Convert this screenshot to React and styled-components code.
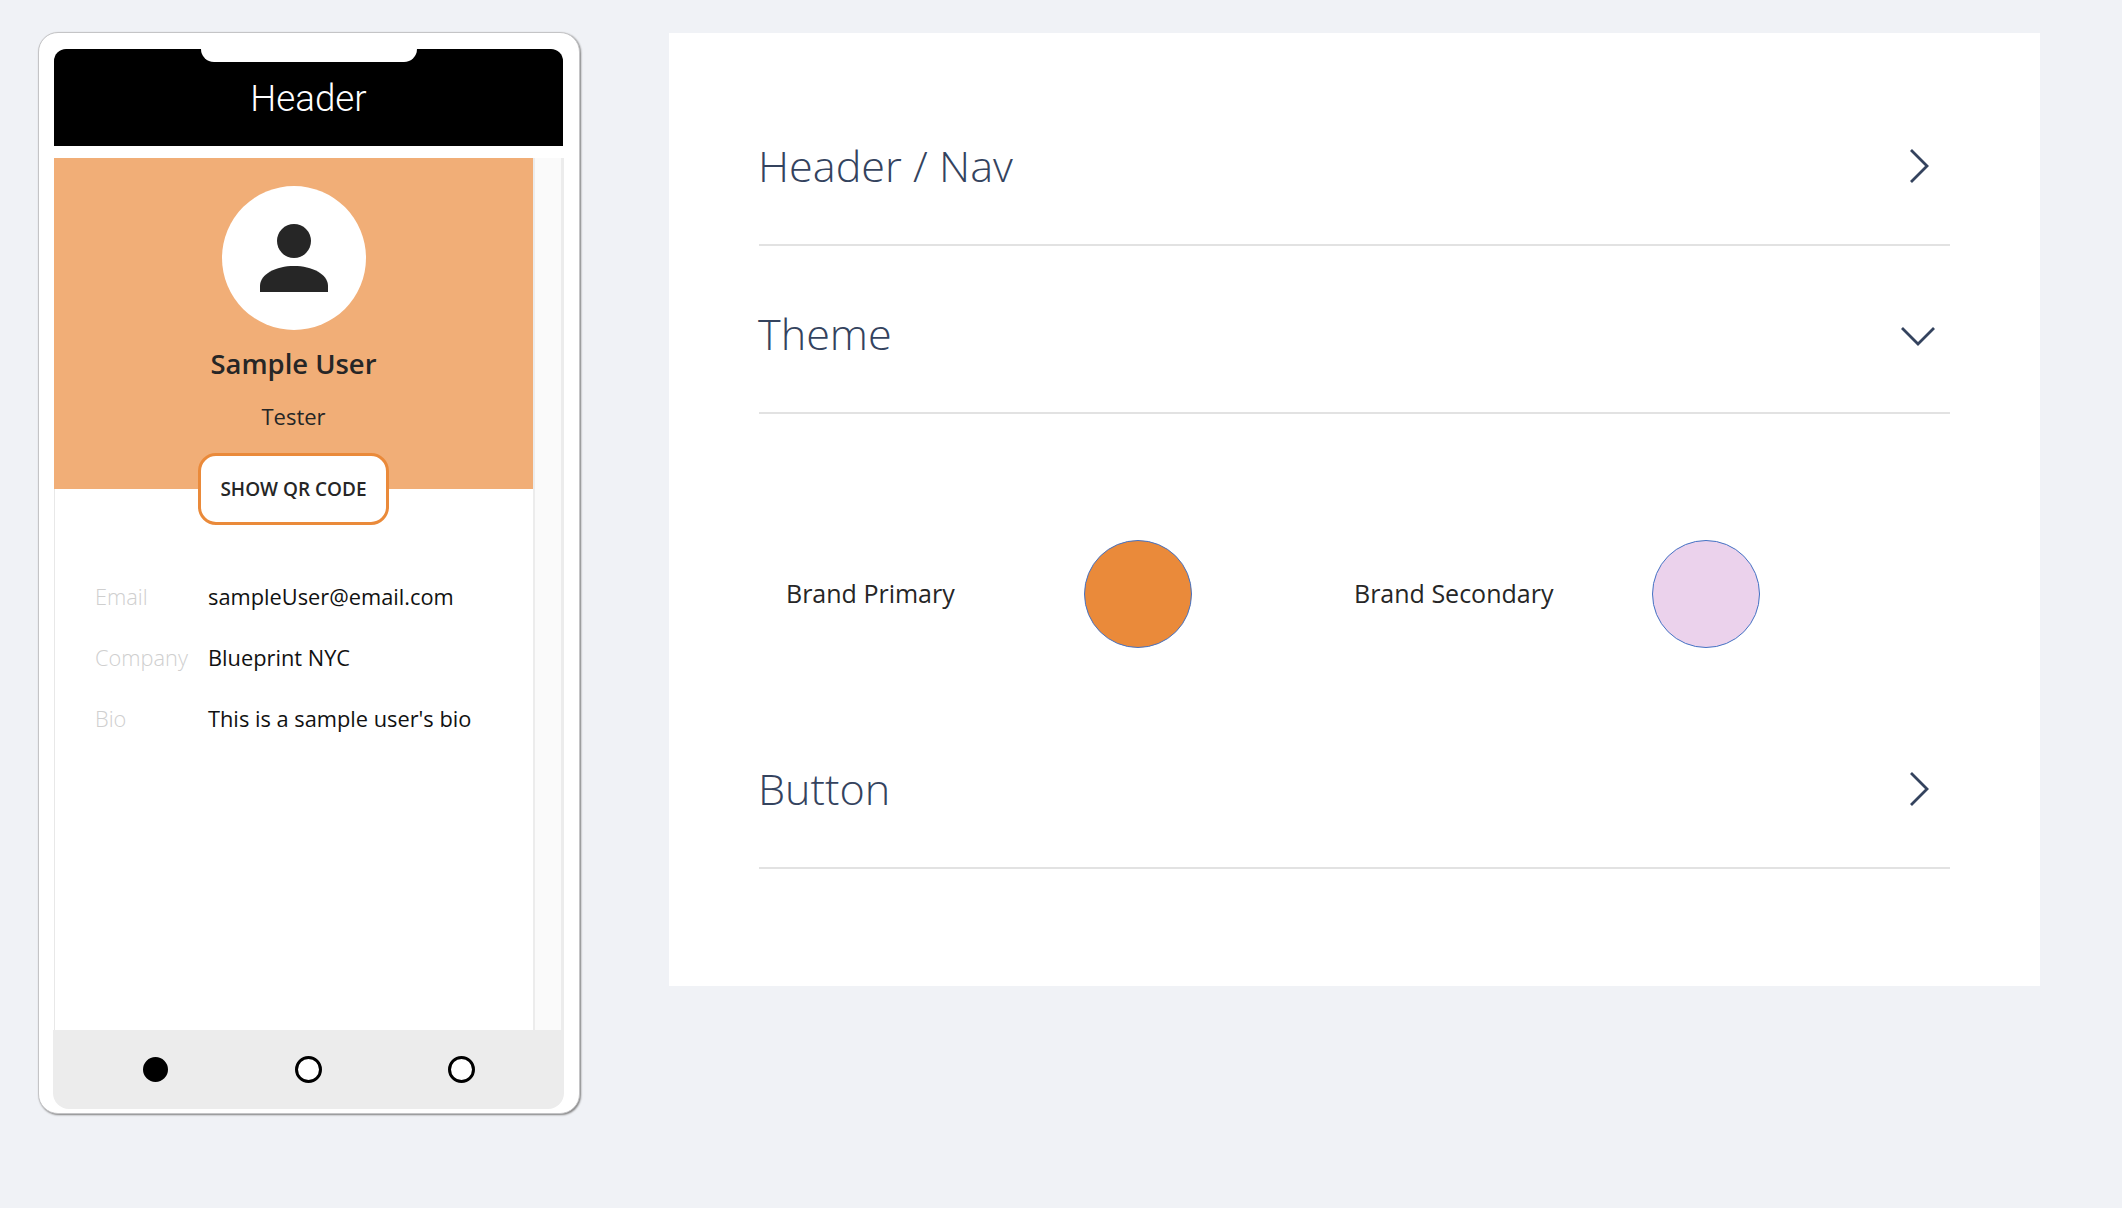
import React from 'react';
import styled, { createGlobalStyle } from 'styled-components';

const GlobalStyle = createGlobalStyle`
  * {
    box-sizing: border-box;
  }
  html, body {
    margin: 0;
    background-color: #f0f2f6;
    font-family: 'Open Sans', sans-serif;
  }
`;

const Page = styled.div`
  display: flex;
  align-items: flex-start;
  gap: 89px;
  height: 1208px;
  padding: 32px 0 0 38px;
  overflow: hidden;
`;

const Phone = styled.div`
  display: flex;
  flex-direction: column;
  flex: none;
  width: 542px;
  height: 1082px;
  padding: 16px 15px 4px;
  background-color: #fff;
  border: 1px solid #c4c4c6;
  border-radius: 20px;
  box-shadow: 1px 1px 2px #808080;
`;

const Header = styled.header`
  position: relative;
  flex: none;
  display: flex;
  align-items: center;
  justify-content: center;
  width: 509px;
  height: 97px;
  padding-top: 2px;
  background-color: #000;
  border-radius: 12px 12px 0 0;
  color: #fff;
  font-family: 'Roboto', sans-serif;
  font-size: 36.7px;
  font-weight: 300;
`;

const Notch = styled.div`
  position: absolute;
  top: 0;
  left: 147px;
  width: 216px;
  height: 13px;
  background-color: #fff;
  border-radius: 0 0 14px 14px;
`;

const Screen = styled.div`
  flex: 1;
  display: flex;
  min-height: 0;
  margin-top: 12px;
`;

const Content = styled.div`
  width: 481px;
  border-left: 1px solid #e8e8e8;
  border-right: 2px solid #ececec;
`;

const Scrollbar = styled.div`
  width: 29px;
  background-color: #fafafa;
  border-right: 3px solid #ececec;
`;

const Hero = styled.div`
  display: flex;
  flex-direction: column;
  align-items: center;
  height: 331px;
  margin-left: -1px;
  padding-top: 28px;
  background-color: #f1ae77;
  color: #262626;
`;

const Avatar = styled.div`
  display: flex;
  align-items: center;
  justify-content: center;
  flex: none;
  width: 144px;
  height: 144px;
  background-color: #fff;
  border-radius: 50%;
`;

const Name = styled.div`
  margin-top: 16px;
  font-size: 27.4px;
  font-weight: 600;
  line-height: 36px;
`;

const Role = styled.div`
  margin-top: 18px;
  font-size: 22px;
  line-height: 32px;
`;

const QrButton = styled.button`
  flex: none;
  width: 191px;
  height: 72px;
  margin-top: 21px;
  padding: 0;
  background-color: #fff;
  border: 3px solid #ea8a3a;
  border-radius: 18px;
  color: #262626;
  font-family: 'Open Sans', sans-serif;
  font-size: 19px;
  font-weight: 600;
`;

const Details = styled.dl`
  display: grid;
  grid-template-columns: 113px 1fr;
  grid-auto-rows: 61px;
  align-items: center;
  margin: 77px 0 0;
  padding-left: 40px;
  font-size: 21.8px;
`;

const Label = styled.dt`
  color: #cfcfcf;
  font-weight: 300;
`;

const Value = styled.dd`
  margin: 0;
  color: #111;
`;

const BottomNav = styled.nav`
  flex: none;
  display: grid;
  grid-template-columns: repeat(3, 153px);
  justify-content: center;
  justify-items: center;
  align-items: center;
  height: 79px;
  margin-left: -1px;
  background-color: #ececec;
  border-radius: 0 0 16px 16px;
`;

const Dot = styled.span`
  width: ${(p) => (p.$active ? '25px' : '27px')};
  height: ${(p) => (p.$active ? '25px' : '27px')};
  background-color: ${(p) => (p.$active ? '#000' : '#fff')};
  border: 3px solid #000;
  border-radius: 50%;
`;

const Panel = styled.main`
  flex: none;
  width: 1371px;
  height: 953px;
  margin-top: 1px;
  padding: 45px 90px 0;
  background-color: #fff;
`;

const AccordionRow = styled.div`
  display: flex;
  align-items: center;
  justify-content: space-between;
  height: 168px;
  padding: 10px 13px 0 0;
  border-bottom: 2px solid #e2e2e2;
`;

const Title = styled.h2`
  margin: 0 0 2px -1px;
  color: #34435e;
  font-size: 43.2px;
  font-weight: 300;
`;

const Swatches = styled.div`
  display: flex;
  align-items: flex-start;
  height: 287px;
  padding: 126px 0 0 27px;
`;

const Swatch = styled.div`
  display: grid;
  grid-template-columns: 298px 108px;
  align-items: center;
  width: 568px;
`;

const SwatchLabel = styled.span`
  margin-bottom: 2px;
  color: #262626;
  font-size: 25px;
`;

const Circle = styled.div`
  width: 108px;
  height: 108px;
  background-color: ${(p) => p.$color};
  border: 1px solid #4472c4;
  border-radius: 50%;
`;

const Chevron = ({ down }) => (
  <svg width="36" height="36" viewBox="0 0 36 36" fill="none" stroke="#34435e" strokeWidth="2.8">
    <path d={down ? 'M1 12L17 28L33 12' : 'M10 2L26 18L10 34'} />
  </svg>
);

const UserIcon = () => (
  <svg width="68" height="68" viewBox="0 0 68 68" fill="#262626">
    <circle cx="34" cy="17" r="17" />
    <path d="M0 68V62C0 50 16 42 34 42S68 50 68 62V68Z" />
  </svg>
);

const details = [
  ['Email', 'sampleUser@email.com'],
  ['Company', 'Blueprint NYC'],
  ['Bio', "This is a sample user's bio"],
];

const App = () => (
  <Page>
    <GlobalStyle />
    <Phone>
      <Header>
        <Notch />
        Header
      </Header>
      <Screen>
        <Content>
          <Hero>
            <Avatar>
              <UserIcon />
            </Avatar>
            <Name>Sample User</Name>
            <Role>Tester</Role>
            <QrButton>SHOW QR CODE</QrButton>
          </Hero>
          <Details>
            {details.map(([label, value]) => (
              <React.Fragment key={label}>
                <Label>{label}</Label>
                <Value>{value}</Value>
              </React.Fragment>
            ))}
          </Details>
        </Content>
        <Scrollbar />
      </Screen>
      <BottomNav>
        <Dot $active />
        <Dot />
        <Dot />
      </BottomNav>
    </Phone>
    <Panel>
      <AccordionRow>
        <Title>Header / Nav</Title>
        <Chevron />
      </AccordionRow>
      <AccordionRow>
        <Title>Theme</Title>
        <Chevron down />
      </AccordionRow>
      <Swatches>
        <Swatch>
          <SwatchLabel>Brand Primary</SwatchLabel>
          <Circle $color="#ea8a3a" />
        </Swatch>
        <Swatch>
          <SwatchLabel>Brand Secondary</SwatchLabel>
          <Circle $color="#ebd2ec" />
        </Swatch>
      </Swatches>
      <AccordionRow>
        <Title>Button</Title>
        <Chevron />
      </AccordionRow>
    </Panel>
  </Page>
);

export default App;
